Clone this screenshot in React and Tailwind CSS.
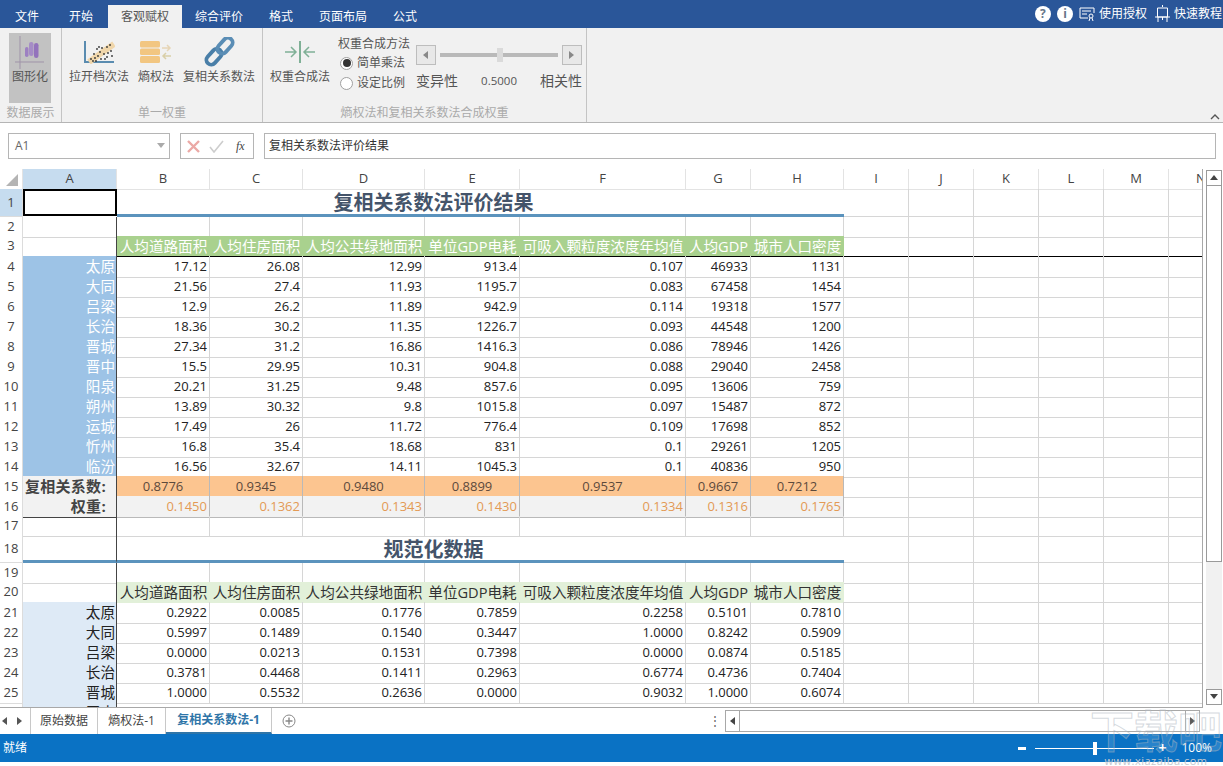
const COLS = "grid grid-cols-[23px_94px_93px_93px_122px_95px_166px_65px_93px_65px_65px_65px_65px_65px_65px]";
const HEADERS = ["A", "B", "C", "D", "E", "F", "G", "H", "I", "J", "K", "L", "M", "N"];
const METRICS = ["人均道路面积", "人均住房面积", "人均公共绿地面积", "单位GDP电耗", "可吸入颗粒度浓度年均值", "人均GDP", "城市人口密度"];

const RAW = [
  ["太原", "17.12", "26.08", "12.99", "913.4", "0.107", "46933", "1131"],
  ["大同", "21.56", "27.4", "11.93", "1195.7", "0.083", "67458", "1454"],
  ["吕梁", "12.9", "26.2", "11.89", "942.9", "0.114", "19318", "1577"],
  ["长治", "18.36", "30.2", "11.35", "1226.7", "0.093", "44548", "1200"],
  ["晋城", "27.34", "31.2", "16.86", "1416.3", "0.086", "78946", "1426"],
  ["晋中", "15.5", "29.95", "10.31", "904.8", "0.088", "29040", "2458"],
  ["阳泉", "20.21", "31.25", "9.48", "857.6", "0.095", "13606", "759"],
  ["朔州", "13.89", "30.32", "9.8", "1015.8", "0.097", "15487", "872"],
  ["运城", "17.49", "26", "11.72", "776.4", "0.109", "17698", "852"],
  ["忻州", "16.8", "35.4", "18.68", "831", "0.1", "29261", "1205"],
  ["临汾", "16.56", "32.67", "14.11", "1045.3", "0.1", "40836", "950"],
];

const NORMAL = [
  ["太原", "0.2922", "0.0085", "0.1776", "0.7859", "0.2258", "0.5101", "0.7810"],
  ["大同", "0.5997", "0.1489", "0.1540", "0.3447", "1.0000", "0.8242", "0.5909"],
  ["吕梁", "0.0000", "0.0213", "0.1531", "0.7398", "0.0000", "0.0874", "0.5185"],
  ["长治", "0.3781", "0.4468", "0.1411", "0.2963", "0.6774", "0.4736", "0.7404"],
  ["晋城", "1.0000", "0.5532", "0.2636", "0.0000", "0.9032", "1.0000", "0.6074"],
];

const COEF = ["0.8776", "0.9345", "0.9480", "0.8899", "0.9537", "0.9667", "0.7212"];
const WEIGHT = ["0.1450", "0.1362", "0.1343", "0.1430", "0.1334", "0.1316", "0.1765"];

function RowNo({ n, active }) {
  return (
    <div className={`flex items-center justify-center border-r border-b border-[#dcdcdc] text-[13px] text-[#444] ${active ? "bg-[#c6dcef]" : "bg-white"}`}>
      {n}
    </div>
  );
}

function Blank({ count = 6, line }) {
  return Array.from({ length: count }).map((_, i) => (
    <div key={i} className={`border-r border-b border-r-[#d6d6d6] ${line ? "border-b-black" : "border-b-[#d6d6d6]"}`} />
  ));
}

function TitleRow({ n, text, height, lineFromA }) {
  return (
    <div className={`${COLS} ${height}`}>
      <RowNo n={n} active={n === 1} />
      {n === 1 ? (
        <div className="mb-[1px] border-2 border-black bg-white" />
      ) : (
        <div className={`border-r border-r-[#444] ${lineFromA ? "border-b-[3px] border-b-[#5b93bd]" : ""}`} />
      )}
      <div className="col-span-7 flex items-center justify-center border-b-[3px] border-[#5b93bd] pt-[3px] pr-[94px] text-[20px] leading-none font-bold text-[#44546a]">
        {text}
      </div>
      <Blank />
    </div>
  );
}

function EmptyRow({ n, height = "h-5" }) {
  return (
    <div className={`${COLS} ${height}`}>
      <RowNo n={n} />
      <div className="border-r border-b border-r-[#444] border-b-[#d6d6d6]" />
      <Blank count={13} />
    </div>
  );
}

function MetricRow({ n, dark }) {
  return (
    <div className={`${COLS} h-5`}>
      <RowNo n={n} />
      <div className="border-r border-b border-r-[#444] border-b-[#d6d6d6]" />
      {METRICS.map((m) => (
        <div
          key={m}
          className={`flex items-center justify-center overflow-hidden pt-[1px] text-[14.6px] leading-none whitespace-nowrap ${dark ? "border-b border-black bg-[#a9d18e] text-white" : "bg-[#e2f0d9] text-[#333]"}`}
        >
          {m}
        </div>
      ))}
      <Blank line={dark} />
    </div>
  );
}

function DataRow({ n, row, dark }) {
  return (
    <div className={`${COLS} h-5`}>
      <RowNo n={n} />
      <div
        className={`flex items-center justify-end border-r border-r-[#444] pr-[1px] text-[14.6px] leading-none ${dark ? "bg-[#9dc3e6] text-white" : "bg-[#deeaf6] text-[#222]"}`}
      >
        {row[0]}
      </div>
      {row.slice(1).map((v, i) => (
        <div key={i} className="flex items-center justify-end border-r border-b border-[#d6d6d6] pt-[1px] pr-[2px] text-[13px] text-[#222]">
          {v}
        </div>
      ))}
      <Blank />
    </div>
  );
}

function SummaryRow({ n, label, values, cellClass }) {
  return (
    <div className={`${COLS} h-5`}>
      <RowNo n={n} />
      <div className="flex items-center justify-end border-r border-b border-r-[#444] border-b-[#444] bg-[#f2f2f2] pr-[10px] text-[15px] leading-none font-bold tracking-[0.3px] text-[#444]">
        {label}
      </div>
      {values.map((v) => (
        <div key={v} className={`flex items-center border-r border-b border-[#b9b9b9] pt-[1px] text-[13px] ${cellClass}`}>
          {v}
        </div>
      ))}
      <Blank />
    </div>
  );
}

function RibbonGroup({ width, label, children }) {
  return (
    <div className={`flex h-full flex-col border-r border-[#c4c4c4] ${width}`}>
      <div className="flex flex-1 items-start">{children}</div>
      <div className="pb-[1px] text-center text-[12px] leading-[16px] text-[#aaa]">{label}</div>
    </div>
  );
}

function BigButton({ icon, label, width }) {
  return (
    <div className={`flex flex-col items-center pt-[9px] ${width}`}>
      <div className="flex h-[30px] items-center justify-center">{icon}</div>
      <div className="mt-[2px] text-[12px] leading-4 whitespace-nowrap text-[#555]">{label}</div>
    </div>
  );
}

function ChartIcon() {
  const dots = [[7, 19], [10, 14], [12, 21], [13, 9], [14, 16], [16, 12], [17, 19], [18, 8], [20, 14], [21, 19], [23, 7], [24, 13], [26, 5], [27, 11], [9, 21], [11, 18], [23, 17], [15, 7], [28, 16]];
  return (
    <svg width="31" height="24" viewBox="0 0 31 24">
      <path d="M1 1v21h29" fill="none" stroke="#5a8cb0" strokeWidth="2" />
      <path d="M5 22L30 4" stroke="#f0d6aa" strokeWidth="6" />
      {dots.map(([x, y], i) => (
        <circle key={i} cx={x} cy={y} r="0.9" fill="#333" />
      ))}
    </svg>
  );
}

function EntropyIcon() {
  return (
    <svg width="32" height="22" viewBox="0 0 32 22">
      <rect x="0" y="0" width="20" height="6.500" rx="1.500" fill="#f2c681" />
      <rect x="0" y="7.500" width="20" height="6.500" rx="1.500" fill="#f2c681" />
      <rect x="0" y="15" width="20" height="7" rx="1.500" fill="#f2c681" />
      <path d="M22 7h8M27 4l3 3-3 3" fill="none" stroke="#e6d5b6" strokeWidth="1.500" />
      <path d="M31 15h-8M26 12l-3 3 3 3" fill="none" stroke="#d9cfa8" strokeWidth="1.500" />
    </svg>
  );
}

function LinkIcon() {
  return (
    <svg width="32" height="30" viewBox="0 0 32 30">
      <g fill="none" strokeWidth="3.800">
        <rect x="2" y="15" width="18" height="9.500" rx="4.700" transform="rotate(-48 11 19.700)" stroke="#4a7fa8" />
        <rect x="13" y="4" width="18" height="9.500" rx="4.700" transform="rotate(-48 22 8.700)" stroke="#5a8db5" />
      </g>
    </svg>
  );
}

function MergeIcon() {
  return (
    <svg width="32" height="24" viewBox="0 0 32 24">
      <path d="M16 1v22" stroke="#7fb096" strokeWidth="2" />
      <path d="M1 12h11M7 7l5 5-5 5M31 12H20M25 7l-5 5 5 5" fill="none" stroke="#7fb096" strokeWidth="1.500" />
    </svg>
  );
}

function BarsIcon() {
  return (
    <svg width="32" height="34" viewBox="0 0 32 34">
      <path d="M6 0v33M1 26h29" stroke="#9f93a8" strokeWidth="1" />
      <rect x="11" y="11" width="3.500" height="10" rx="1.700" fill="#9d80c2" />
      <rect x="15" y="6" width="4.500" height="14" rx="2.200" fill="#a58cc6" />
      <rect x="20" y="7" width="4.500" height="15" rx="2.200" fill="#9373bc" />
    </svg>
  );
}

function Triangle({ dir, color = "#666" }) {
  const d = { left: "M6 0v8L1 4z", right: "M1 0v8l5-4z", up: "M0 6h8L4 1z", down: "M0 1h8L4 6z" }[dir];
  return (
    <svg width="8" height="8" viewBox="0 0 8 8">
      <path d={d} fill={color} />
    </svg>
  );
}

function SliderButton({ dir }) {
  return (
    <div className="flex h-[20px] w-[20px] items-center justify-center border border-[#bdbdbd] bg-[#e8e8e8]">
      <Triangle dir={dir} color="#888" />
    </div>
  );
}

function Radio({ checked, label }) {
  return (
    <div className="flex h-5 items-center gap-[4px] pl-[2px] text-[12px] text-[#555]">
      <span className="flex h-[13px] w-[13px] items-center justify-center rounded-full border border-[#a0a0a0] bg-white">
        {checked && <span className="h-[8px] w-[8px] rounded-full bg-[#333]" />}
      </span>
      {label}
    </div>
  );
}

function Ribbon() {
  return (
    <div className="flex h-[95px] border-b border-[#b5b5b5] bg-[#f1f1f1]">
      <RibbonGroup width="w-[62px]" label="数据展示">
        <div className="mt-[5px] ml-[9px] flex h-[70px] w-[42px] flex-col items-center bg-[#c2c2c2] pt-[3px]">
          <BarsIcon />
          <div className="mt-[-1px] text-[12px] leading-4 whitespace-nowrap text-[#555]">图形化</div>
        </div>
      </RibbonGroup>
      <RibbonGroup width="w-[201px]" label="单一权重">
        <div className="flex pl-[6px]">
          <BigButton icon={<ChartIcon />} label="拉开档次法" width="w-[62px]" />
          <BigButton icon={<EntropyIcon />} label="熵权法" width="w-[52px]" />
          <BigButton icon={<LinkIcon />} label="复相关系数法" width="w-[74px]" />
        </div>
      </RibbonGroup>
      <RibbonGroup width="w-[324px]" label="熵权法和复相关系数法合成权重">
        <div className="flex pl-[6px]">
          <BigButton icon={<MergeIcon />} label="权重合成法" width="w-[62px]" />
          <div className="ml-[7px] flex flex-col pt-[8px]">
            <div className="mb-[1px] text-[12px] leading-4 text-[#555]">权重合成方法</div>
            <Radio checked label="简单乘法" />
            <Radio label="设定比例" />
          </div>
          <div className="ml-[6px] flex w-[166px] flex-col pt-[17px]">
            <div className="flex items-center">
              <SliderButton dir="left" />
              <div className="relative mx-[4px] h-[4px] flex-1 bg-[#b9b9b9]">
                <div className="absolute top-[-5px] left-[57px] h-[14px] w-[6px] bg-[#dadada]" />
              </div>
              <SliderButton dir="right" />
            </div>
            <div className="mt-[6px] flex items-center justify-between text-[14px] leading-5 text-[#555]">
              <span>变异性</span>
              <span className="text-[11.5px]">0.5000</span>
              <span>相关性</span>
            </div>
          </div>
        </div>
      </RibbonGroup>
      <div className="relative flex-1">
        <svg className="absolute right-[3px] bottom-[2px]" width="10" height="7" viewBox="0 0 10 7">
          <path d="M1 6l4-4 4 4" fill="none" stroke="#555" strokeWidth="1.400" />
        </svg>
      </div>
    </div>
  );
}

function TopBar() {
  const tabs = [
    ["文件", "w-[54px]"],
    ["开始", "w-[54px]"],
    ["客观赋权", "w-[74px]", true],
    ["综合评价", "w-[74px]"],
    ["格式", "w-[50px]"],
    ["页面布局", "w-[74px]"],
    ["公式", "w-[50px]"],
  ];
  return (
    <div className="flex h-[28px] items-end bg-[#2a5699] text-[12px] text-white">
      {tabs.map(([t, w, active]) => (
        <div key={t} className={`flex h-[23px] items-center justify-center ${w} ${active ? "bg-[#f1f1f1] text-[#555]" : ""}`}>
          {t}
        </div>
      ))}
      <div className="flex h-full flex-1 items-center justify-end pr-[1px]">
        <span className="flex h-4 w-4 items-center justify-center rounded-full bg-white text-[12px] font-bold text-[#66768a]">?</span>
        <span className="ml-[6px] flex h-4 w-4 items-center justify-center rounded-full bg-white text-[12px] font-bold text-[#66768a]">i</span>
        <svg className="ml-[6px]" width="16" height="14" viewBox="0 0 16 14" fill="none" stroke="#fff" strokeWidth="1">
          <path d="M9 11H1V1h14v5M3 4h9M3 7h5" />
          <circle cx="12" cy="9" r="2" />
          <path d="M11 11l-1 3M13 11l1 3" />
        </svg>
        <span className="ml-[4px]">使用授权</span>
        <svg className="ml-[8px]" width="15" height="18" viewBox="0 0 15 18" fill="none" stroke="#fff" strokeWidth="1">
          <path d="M7.500 0v2M2.500 3h10v9h-10zM0 12h15M3 12v5M12 12v5M7.500 12v3" />
        </svg>
        <span className="ml-[4px]">快速教程</span>
      </div>
    </div>
  );
}

function FormulaBar() {
  return (
    <div className="flex h-[46px] items-start gap-[10px] bg-white pt-[10px] pr-[7px] pl-[8px]">
      <div className="flex h-[26px] w-[162px] items-center justify-between border border-[#b5b5b5] pr-[4px] pl-[6px] text-[12px] text-[#666]">
        A1
        <Triangle dir="down" color="#aaa" />
      </div>
      <div className="flex h-[26px] w-[74px] items-center border border-[#b5b5b5] pl-[6px]">
        <svg width="13" height="13" viewBox="0 0 13 13">
          <path d="M1 1l11 11M12 1L1 12" stroke="#eba9a6" strokeWidth="2.400" />
        </svg>
        <svg className="ml-[9px]" width="15" height="13" viewBox="0 0 15 13">
          <path d="M1 7l4 5L14 1" fill="none" stroke="#cdcdcd" strokeWidth="1.600" />
        </svg>
        <span className="ml-[12px] font-['Liberation_Serif',serif] text-[12px] text-[#444] italic">fx</span>
      </div>
      <div className="flex h-[26px] flex-1 items-center border border-[#b5b5b5] pl-[4px] text-[12px] text-[#333]">复相关系数法评价结果</div>
    </div>
  );
}

function Sheet() {
  return (
    <div className="flex h-[539px]">
      <div className="w-[1203px] overflow-hidden border-r border-b border-[#a8a8a8]">
        <div className={`${COLS} h-5`}>
          <div className="flex items-end justify-end border-r border-b border-[#e3e3e3] pr-[4px] pb-[3px]">
            <div className="h-0 w-0 border-b-[12px] border-l-[12px] border-b-[#b4b4b4] border-l-transparent" />
          </div>
          {HEADERS.map((h, i) => (
            <div
              key={h}
              className={`flex items-center justify-center border-r border-b border-[#e3e3e3] text-[13px] text-[#444] ${i === 0 ? "bg-[#c6dcef]" : "bg-white"}`}
            >
              {h}
            </div>
          ))}
        </div>
        <TitleRow n={1} text="复相关系数法评价结果" height="h-[28px]" />
        <EmptyRow n={2} height="h-[19px]" />
        <MetricRow n={3} dark />
        {RAW.map((row, i) => (
          <DataRow key={row[0]} n={i + 4} row={row} dark />
        ))}
        <SummaryRow n={15} label="复相关系数:" values={COEF} cellClass="justify-center bg-[#fcc590] text-[#5c4a3c]" />
        <SummaryRow n={16} label="权重:" values={WEIGHT} cellClass="justify-end bg-[#f2f2f2] pr-[2px] text-[#e39a55]" />
        <EmptyRow n={17} />
        <TitleRow n={18} text="规范化数据" height="h-[27px]" lineFromA />
        <EmptyRow n={19} height="h-[19px]" />
        <MetricRow n={20} />
        {NORMAL.map((row, i) => (
          <DataRow key={row[0]} n={i + 21} row={row} />
        ))}
        <div className={`${COLS} h-[6px] overflow-hidden`}>
          <div className="border-r border-[#dcdcdc]" />
          <div className="h-5 border-r border-r-[#444] bg-[#deeaf6] pr-[1px] text-right text-[14.6px] leading-5 text-[#222]">晋中</div>
        </div>
      </div>
      <div className="flex w-[20px] flex-col pt-[1px] pr-[1px] pb-[3px] pl-[3px]">
        <div className="flex h-[16px] items-center justify-center border border-[#9a9a9a]">
          <Triangle dir="up" color="#444" />
        </div>
        <div className="flex-1 bg-[#f1f1f1]">
          <div className="h-[376px] border-x border-b border-[#9a9a9a] bg-white" />
        </div>
        <div className="flex h-[16px] items-center justify-center border border-[#9a9a9a]">
          <Triangle dir="down" color="#444" />
        </div>
      </div>
    </div>
  );
}

function SheetTabs() {
  return (
    <div className="flex h-[26px] items-stretch bg-white text-[12px] text-[#444]">
      <div className="flex w-[31px] items-center justify-between border-r border-[#c8c8c8] pr-[6px] pl-[1px]">
        <Triangle dir="left" color="#555" />
        <Triangle dir="right" color="#555" />
      </div>
      <div className="flex w-[67px] items-center justify-center border-r border-[#c8c8c8]">原始数据</div>
      <div className="flex w-[68px] items-center justify-center border-r border-[#c8c8c8]">熵权法-1</div>
      <div className="flex w-[106px] items-center justify-center border-r border-b-2 border-r-[#c8c8c8] border-b-[#2f75a8] font-bold text-[#2f75a8]">复相关系数法-1</div>
      <div className="flex w-[34px] items-center justify-center">
        <svg width="14" height="14" viewBox="0 0 14 14" fill="none" stroke="#888" strokeWidth="1">
          <circle cx="7" cy="7" r="6" />
          <path d="M7 3.500v7M3.500 7h7" strokeWidth="1.400" />
        </svg>
      </div>
      <div className="flex flex-1 items-center justify-end pr-[4px] text-[#666]">⋮</div>
      <div className="my-[2px] flex w-[475px] border border-[#a8a8a8]">
        <div className="flex w-[14px] items-center justify-center border-r border-[#a8a8a8]">
          <Triangle dir="left" color="#444" />
        </div>
        <div className="flex-1" />
        <div className="flex w-[14px] items-center justify-center border-l border-[#a8a8a8]">
          <Triangle dir="right" color="#444" />
        </div>
      </div>
      <div className="w-[23px]" />
    </div>
  );
}

function StatusBar() {
  return (
    <div className="flex h-[28px] items-center justify-between bg-[#0a72c4] pr-[11px] pl-[3px] text-[12px] text-white">
      <span>就绪</span>
      <div className="flex items-center">
        <div className="h-[3px] w-[8px] bg-white" />
        <div className="relative ml-[9px] h-[1px] w-[119px] bg-white">
          <div className="absolute top-[-6px] left-[58px] h-[13px] w-[4px] bg-white" />
        </div>
        <span className="ml-[4px] text-[14px] leading-none font-bold">+</span>
        <span className="ml-[15px]">100%</span>
      </div>
    </div>
  );
}

function Watermark() {
  return (
    <div className="pointer-events-none absolute top-[706px] right-0 flex w-[134px] flex-col items-center">
      <span className="text-[44px] leading-[50px] font-bold whitespace-nowrap text-white/15 [-webkit-text-stroke:1px_rgba(170,180,190,0.5)]">下载吧</span>
      <span className="text-[11px] leading-[10px] tracking-[0.5px] text-[#c4c9cf]">www.xiazaiba.com</span>
    </div>
  );
}

export default function App() {
  return (
    <div className="relative h-[766px] w-[1223px] overflow-hidden bg-white font-['Open_Sans','Noto_Sans_CJK_SC',sans-serif]">
      <TopBar />
      <Ribbon />
      <FormulaBar />
      <Sheet />
      <SheetTabs />
      <StatusBar />
      <Watermark />
    </div>
  );
}
